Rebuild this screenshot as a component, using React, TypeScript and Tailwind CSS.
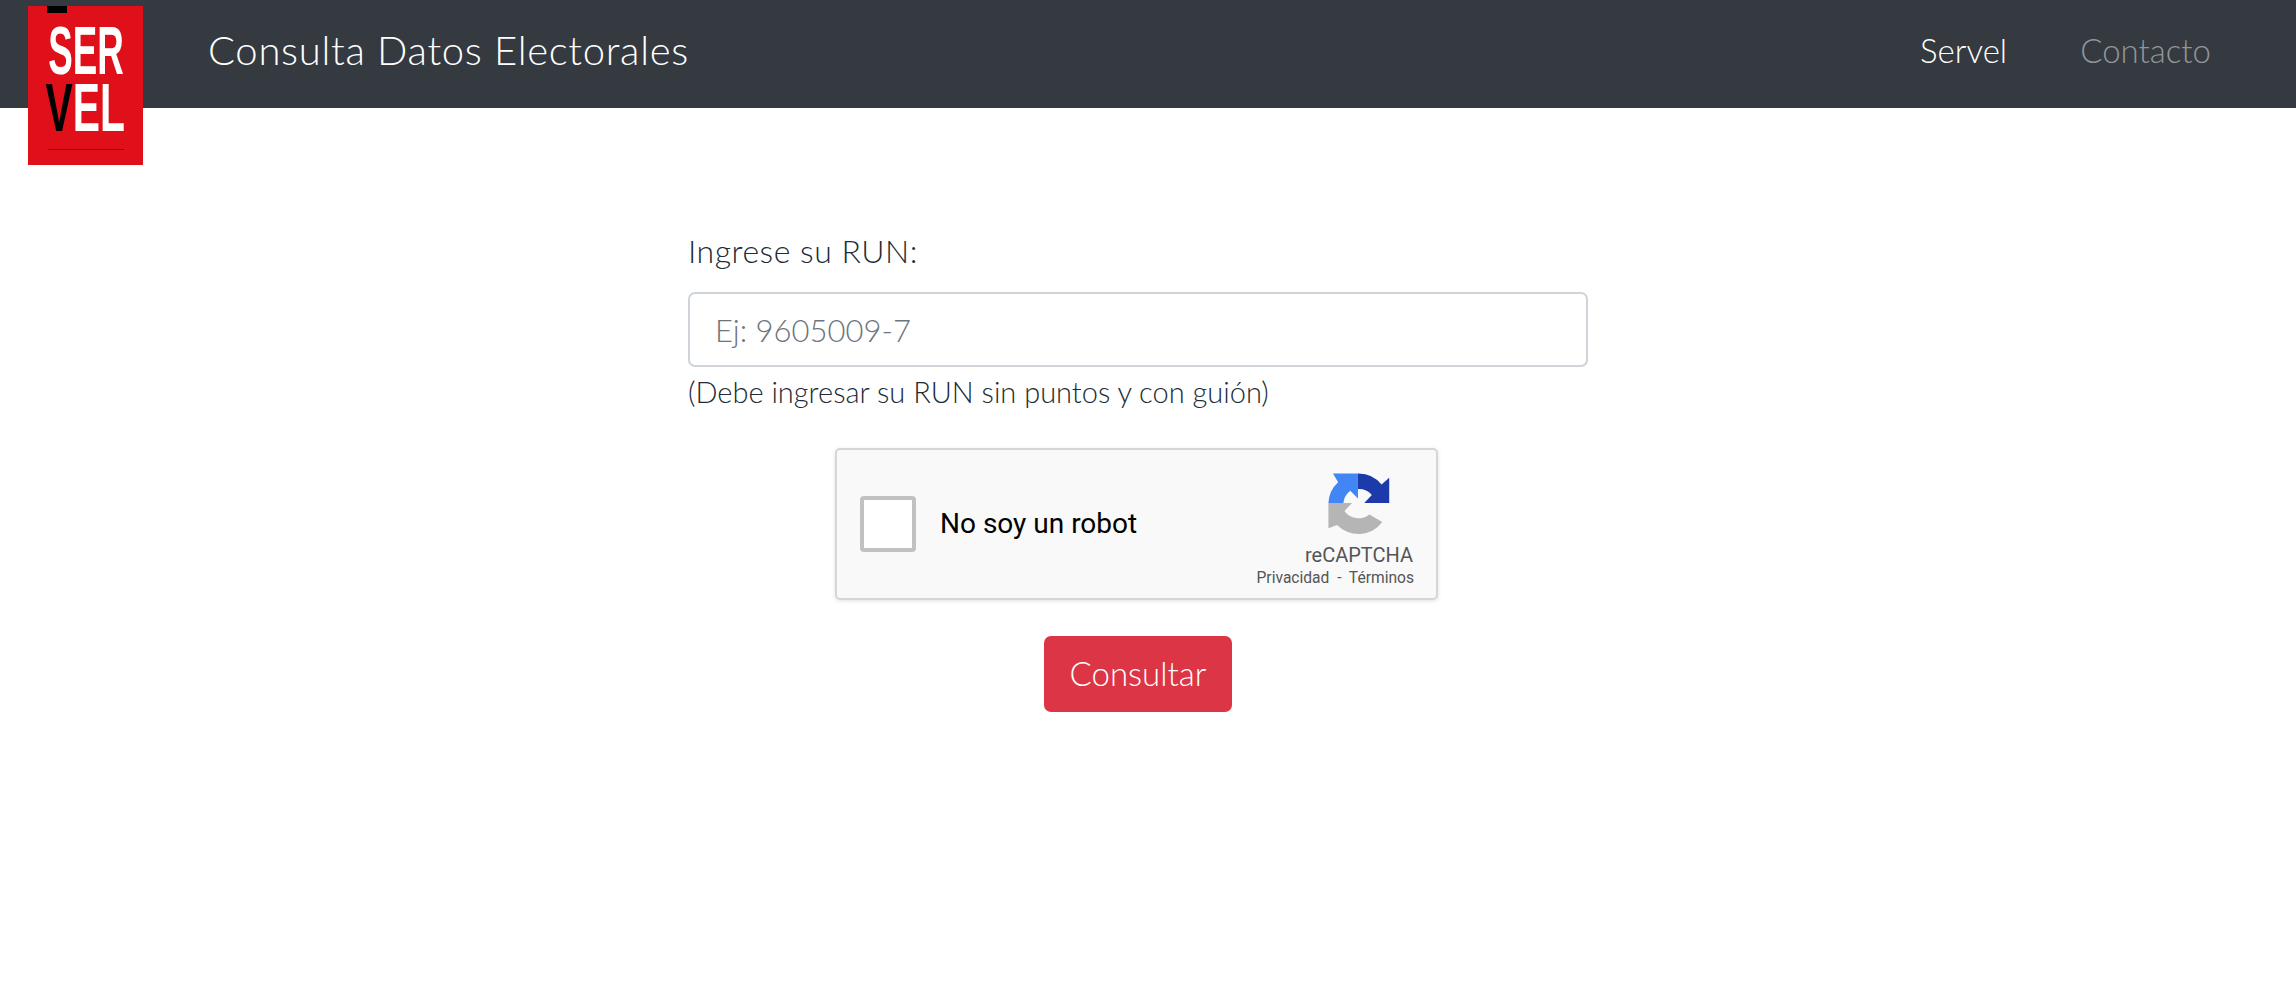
import React from "react";

const avenir = "font-['Lato','Noto_Sans',sans-serif] font-light";

function RecaptchaIcon() {
  return (
    <svg width="66" height="64" viewBox="140 35 190 180" aria-hidden="true">
      <path fill="#1c3aa9" d="M232 40A85 85 0 0 1 300 72L322 52V125H250L272 102A50 50 0 0 0 232 85Z" />
      <path fill="#4285f4" d="M147 125A85 85 0 0 1 175 65L160 40H232V112L210 90A50 50 0 0 0 190 125Z" />
      <path fill="#b5b5b5" d="M147 125H215L193 148A50 50 0 0 0 265 158L302 180A85 85 0 0 1 172 188L147 198Z" />
    </svg>
  );
}

function Logo() {
  return (
    <div className="relative ml-[28px] mt-[6px] flex h-[159px] w-[115px] shrink-0 flex-col items-center overflow-hidden bg-[#e0101a] font-['Liberation_Sans',sans-serif] font-bold text-white">
      <div className="absolute left-[19px] top-0 h-[7px] w-[20px] bg-black" />
      <div className="mt-[16px] h-[57px] scale-x-[0.54] text-[68px] leading-[57px]">SER</div>
      <div className="h-[57px] scale-x-[0.6] text-[68px] leading-[57px]">
        <span className="text-black">V</span>EL
      </div>
      <div className="mt-[13px] h-px w-[76px] bg-[#7a0a0a]" />
    </div>
  );
}

export default function App() {
  return (
    <div className={`min-h-[988px] bg-white ${avenir}`}>
      <nav className="flex h-[108px] items-start bg-[#343a40]">
        <Logo />
        <div className="ml-[65px] mt-[26px] text-[40px] leading-[48px] tracking-[0.7px] text-white">
          Consulta Datos Electorales
        </div>
        <div className="ml-auto mr-[85px] mt-[30px] flex gap-[73px] text-[33px] leading-[40px]">
          <span className="text-white">Servel</span>
          <span className="text-[#92959a]">Contacto</span>
        </div>
      </nav>

      <main className="ml-[688px] mt-[123px] w-[900px]">
        <div className="text-[32px] leading-[40px] tracking-[0.5px] text-[#212b36]">Ingrese su RUN:</div>
        <input
          readOnly
          placeholder="Ej: 9605009-7"
          className="mt-[21px] block h-[75px] w-full rounded-[7px] border-2 border-[#ced4da] bg-white px-[25px] text-[31px] text-[#495057] outline-none placeholder:text-[#6c757d]"
        />
        <div className="mt-[7px] text-[29px] leading-[36px] text-[#212b36]">
          (Debe ingresar su RUN sin puntos y con guión)
        </div>

        <div className="ml-[147px] mt-[38px] flex h-[152px] w-[603px] items-center rounded-[5px] border-2 border-[#d6d6d6] bg-[#f9f9f9] pl-[23px] pr-[22px] font-['Roboto',sans-serif] font-normal shadow-[0_1px_4px_rgba(0,0,0,0.12)]">
          <div className="h-[56px] w-[56px] rounded-[4px] border-[4px] border-[#c1c1c1] bg-white" />
          <div className="ml-[24px] text-[28px] leading-none text-black">No soy un robot</div>
          <div className="ml-auto flex flex-col items-end pt-[10px]">
            <div className="mr-[22px]">
              <RecaptchaIcon />
            </div>
            <div className="mr-[1px] mt-[8px] text-[20px] leading-[24px] text-[#555555]">reCAPTCHA</div>
            <div className="mt-[1px] whitespace-pre text-[15.6px] leading-[20px] text-[#555555]">Privacidad  -  Términos</div>
          </div>
        </div>

        <button className="ml-[356px] mt-[36px] block h-[76px] w-[188px] rounded-[7px] bg-[#dc3545] text-[33px] text-white">
          Consultar
        </button>
      </main>
    </div>
  );
}
